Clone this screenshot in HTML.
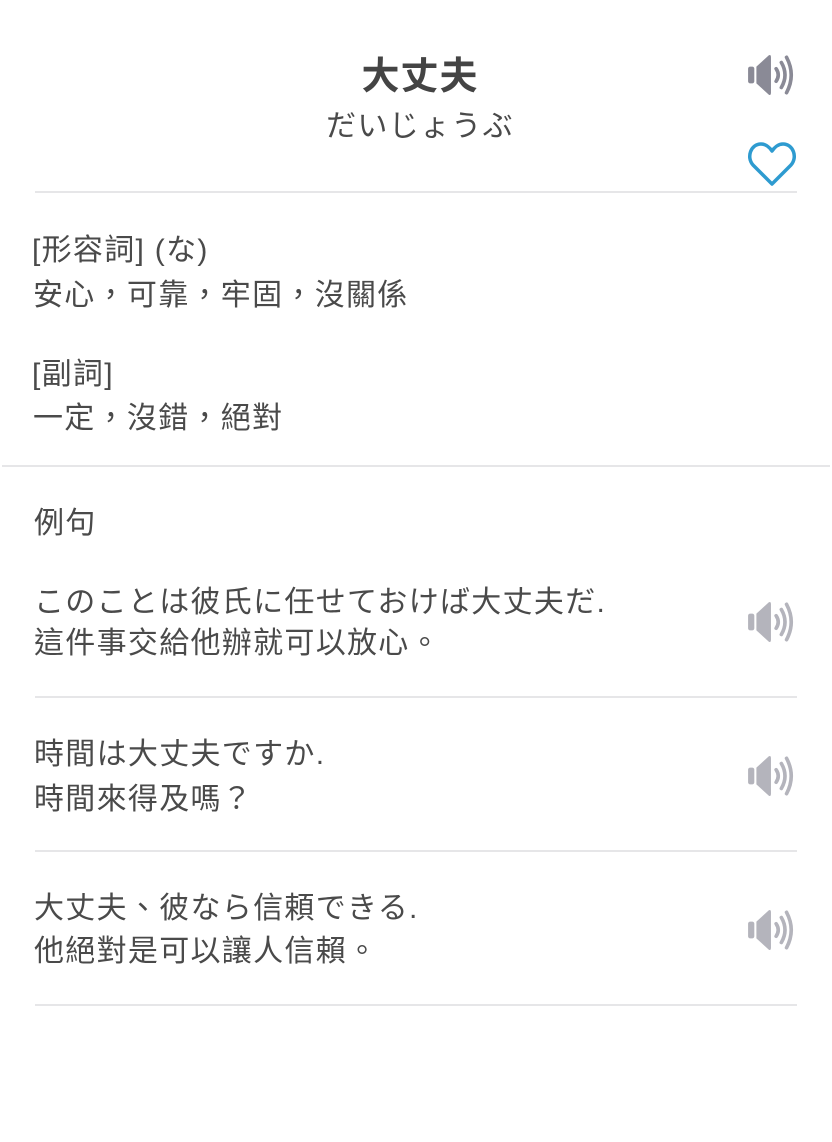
<!DOCTYPE html>
<html><head><meta charset="utf-8"><style>
html,body{margin:0;padding:0;background:#fff;}
body{width:832px;height:1142px;position:relative;overflow:hidden;font-family:"Liberation Sans","Noto Sans CJK TC",sans-serif;color:#4a4a4a;}
.t{position:absolute;white-space:nowrap;font-size:30px;line-height:44px;letter-spacing:1.3px;}
.hr{position:absolute;height:2px;background:#e6e6e8;}
.sp{position:absolute;width:52px;height:48px;}
</style></head><body>
<div class="t" style="left:0;width:840px;text-align:center;top:55px;font-size:38px;font-weight:bold;color:#444;letter-spacing:1px;">大丈夫</div>
<div class="t" style="left:0;width:840px;text-align:center;top:105px;font-size:30px;">だいじょうぶ</div>

<svg class="sp" style="left:746px;top:51px" viewBox="0 0 50 46"><g fill="#8a8a96"><rect x="2" y="15" width="6" height="16" rx="2"/><path d="M10 15 L22 4 Q24 3 24 6 L24 40 Q24 43 22 42 L10 31 Z"/></g><g fill="none" stroke="#8a8a96" stroke-width="3.5" stroke-linecap="round"><path d="M29 17 Q33 23 29 29"/><path d="M34 11 Q41 23 34 35"/><path d="M39 6 Q48 23 39 40"/></g></svg>

<svg style="position:absolute;left:747px;top:140px" width="50" height="48" viewBox="0 0 50 48"><path d="M25 44 L6 25 C-1 17 4 4 14 4 C19 4 23 8 25 11 C27 8 31 4 36 4 C46 4 51 17 44 25 Z" fill="none" stroke="#2e9bd0" stroke-width="3.5" stroke-linejoin="round"/></svg>

<div class="hr" style="left:35px;width:762px;top:191px"></div>

<div class="t" style="left:32px;top:229px">[形容詞] (な)</div>
<div class="t" style="left:33px;top:274px">安心，可靠，牢固，沒關係</div>
<div class="t" style="left:32px;top:353px">[副詞]</div>
<div class="t" style="left:33px;top:397px">一定，沒錯，絕對</div>

<div class="hr" style="left:2px;width:828px;top:465px"></div>

<div class="t" style="left:34px;top:502px">例句</div>

<div class="t" style="left:34px;top:581px">このことは彼氏に任せておけば大丈夫だ.</div>
<div class="t" style="left:34px;top:622px">這件事交給他辦就可以放心。</div>
<svg class="sp" style="left:746px;top:598px" viewBox="0 0 50 46"><g fill="#b4b4bc"><rect x="2" y="15" width="6" height="16" rx="2"/><path d="M10 15 L22 4 Q24 3 24 6 L24 40 Q24 43 22 42 L10 31 Z"/></g><g fill="none" stroke="#b4b4bc" stroke-width="3.5" stroke-linecap="round"><path d="M29 17 Q33 23 29 29"/><path d="M34 11 Q41 23 34 35"/><path d="M39 6 Q48 23 39 40"/></g></svg>
<div class="hr" style="left:35px;width:762px;top:696px"></div>

<div class="t" style="left:34px;top:733px">時間は大丈夫ですか.</div>
<div class="t" style="left:34px;top:778px">時間來得及嗎？</div>
<svg class="sp" style="left:746px;top:752px" viewBox="0 0 50 46"><g fill="#b4b4bc"><rect x="2" y="15" width="6" height="16" rx="2"/><path d="M10 15 L22 4 Q24 3 24 6 L24 40 Q24 43 22 42 L10 31 Z"/></g><g fill="none" stroke="#b4b4bc" stroke-width="3.5" stroke-linecap="round"><path d="M29 17 Q33 23 29 29"/><path d="M34 11 Q41 23 34 35"/><path d="M39 6 Q48 23 39 40"/></g></svg>
<div class="hr" style="left:35px;width:762px;top:850px"></div>

<div class="t" style="left:34px;top:887px">大丈夫、彼なら信頼できる.</div>
<div class="t" style="left:34px;top:930px">他絕對是可以讓人信賴。</div>
<svg class="sp" style="left:746px;top:906px" viewBox="0 0 50 46"><g fill="#b4b4bc"><rect x="2" y="15" width="6" height="16" rx="2"/><path d="M10 15 L22 4 Q24 3 24 6 L24 40 Q24 43 22 42 L10 31 Z"/></g><g fill="none" stroke="#b4b4bc" stroke-width="3.5" stroke-linecap="round"><path d="M29 17 Q33 23 29 29"/><path d="M34 11 Q41 23 34 35"/><path d="M39 6 Q48 23 39 40"/></g></svg>
<div class="hr" style="left:35px;width:762px;top:1004px"></div>
</body></html>
